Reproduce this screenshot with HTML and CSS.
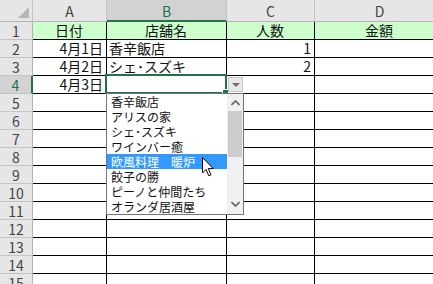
FILE: index.html
```html
<!DOCTYPE html>
<html lang="ja">
<head>
  <meta charset="UTF-8">
  <meta name="viewport" content="width=device-width, initial-scale=1.0">
  <title>店舗リスト</title>
  <link rel="stylesheet" href="styles.css">
</head>
<body>
  <div class="sheet">
    <div class="corner"><span class="corner__tri"></span></div>
    <div class="col-head">A</div>
    <div class="col-head _active">B</div>
    <div class="col-head">C</div>
    <div class="col-head">D</div>

    <div class="row-head">1</div>
    <div class="cell title">日付</div>
    <div class="cell title">店舗名</div>
    <div class="cell title">人数</div>
    <div class="cell title">金額</div>

    <div class="row-head">2</div>
    <div class="cell num">4月1日</div>
    <div class="cell">香辛飯店</div>
    <div class="cell num">1</div>
    <div class="cell"></div>

    <div class="row-head">3</div>
    <div class="cell num">4月2日</div>
    <div class="cell">シェ･スズキ</div>
    <div class="cell num">2</div>
    <div class="cell"></div>

    <div class="row-head _active">4</div>
    <div class="cell num">4月3日</div>
    <div class="cell"></div>
    <div class="cell"></div>
    <div class="cell"></div>

    <div class="row-head">5</div><div class="cell"></div><div class="cell"></div><div class="cell"></div><div class="cell"></div>
    <div class="row-head">6</div><div class="cell"></div><div class="cell"></div><div class="cell"></div><div class="cell"></div>
    <div class="row-head">7</div><div class="cell"></div><div class="cell"></div><div class="cell"></div><div class="cell"></div>
    <div class="row-head">8</div><div class="cell"></div><div class="cell"></div><div class="cell"></div><div class="cell"></div>
    <div class="row-head">9</div><div class="cell"></div><div class="cell"></div><div class="cell"></div><div class="cell"></div>
    <div class="row-head">10</div><div class="cell"></div><div class="cell"></div><div class="cell"></div><div class="cell"></div>
    <div class="row-head">11</div><div class="cell"></div><div class="cell"></div><div class="cell"></div><div class="cell"></div>
    <div class="row-head">12</div><div class="cell"></div><div class="cell"></div><div class="cell"></div><div class="cell"></div>
    <div class="row-head">13</div><div class="cell"></div><div class="cell"></div><div class="cell"></div><div class="cell"></div>
    <div class="row-head">14</div><div class="cell"></div><div class="cell"></div><div class="cell"></div><div class="cell"></div>
    <div class="row-head">15</div><div class="cell"></div><div class="cell"></div><div class="cell"></div><div class="cell"></div>

    <div class="selection"><span class="selection__handle"></span></div>
    <div class="drop__btn"><span class="drop__arrow"></span></div>

    <div class="list">
      <ul class="list__items">
        <li>香辛飯店</li>
        <li>アリスの家</li>
        <li>シェ･スズキ</li>
        <li>ワインバー癒</li>
        <li class="_hover">欧風料理　暖炉</li>
        <li>餃子の勝</li>
        <li>ピーノと仲間たち</li>
        <li>オランダ居酒屋</li>
      </ul>
      <div class="scroll">
        <svg class="scroll__up" width="9" height="6" viewBox="0 0 9 6"><path d="M0.5 5 L4.5 1 L8.5 5" fill="none" stroke="#606060" stroke-width="1.6"/></svg>
        <div class="scroll__thumb"></div>
        <svg class="scroll__down" width="9" height="6" viewBox="0 0 9 6"><path d="M0.5 1 L4.5 5 L8.5 1" fill="none" stroke="#606060" stroke-width="1.6"/></svg>
      </div>
    </div>

    <svg class="cursor" width="13" height="20" viewBox="0 0 13 20">
      <path d="M0.5 0.5 L0.5 16 L4 12.5 L6.8 18.8 L9 17.8 L6.3 11.6 L11.2 11.6 Z" fill="#fff" stroke="#000" stroke-width="1"/>
    </svg>
  </div>
</body>
</html>
```

FILE: styles.css
```css
body {
  margin: 0;
  overflow: hidden;
  background: #fff;
  font-family: "Noto Sans CJK JP", sans-serif;
}

.sheet {
  position: relative;
  display: grid;
  grid-template-columns: 33px 74px 120px 88px 130px;
  grid-template-rows: 22px;
  grid-auto-rows: 18px;
}

.corner {
  position: relative;
  background: #e6e6e6;
  border-right: 1px solid #c4c4c4;
  border-bottom: 1px solid #b4b4b4;
}
.corner__tri {
  position: absolute;
  right: 3px;
  bottom: 3px;
  width: 0;
  height: 0;
  border-left: 11px solid transparent;
  border-bottom: 11px solid #b6b6b6;
}

.col-head {
  background: #e6e6e6;
  border-right: 1px solid #c4c4c4;
  border-bottom: 1px solid #b4b4b4;
  color: #444;
  font-size: 14px;
  line-height: 19px;
  padding-top: 2px;
  text-align: center;
}
.col-head._active {
  background: #d2d2d2;
  color: #217346;
  border-bottom: 2px solid #217346;
}

.row-head {
  background: #e6e6e6;
  border-right: 1px solid #b4b4b4;
  border-bottom: 1px solid #c4c4c4;
  color: #444;
  font-size: 14px;
  line-height: 18px;
  text-align: center;
}
.row-head._active {
  background: #d2d2d2;
  color: #217346;
  border-right: 2px solid #217346;
}

.cell {
  border-right: 1px solid #000;
  border-bottom: 1px solid #000;
  padding: 0 3px 0 2px;
  font-size: 14px;
  line-height: 17px;
  white-space: nowrap;
  color: #111;
}
.cell.title {
  background: #ccffcc;
  text-align: center;
}
.cell.num {
  text-align: right;
}

.selection {
  position: absolute;
  left: 105px;
  top: 74px;
  width: 122px;
  height: 20px;
  box-sizing: border-box;
  border: 2px solid #217346;
}
.selection__handle {
  position: absolute;
  right: -4px;
  bottom: -4px;
  width: 5px;
  height: 5px;
  background: #217346;
  border: 1px solid #fff;
}

.drop__btn {
  position: absolute;
  left: 228px;
  top: 77px;
  width: 15px;
  height: 15px;
  box-sizing: border-box;
  background: #e9e9e9;
  border: 1px solid #c8c8c8;
  display: flex;
  align-items: center;
  justify-content: center;
}
.drop__arrow {
  width: 0;
  height: 0;
  border-left: 4px solid transparent;
  border-right: 4px solid transparent;
  border-top: 4px solid #707070;
}

.list {
  position: absolute;
  left: 106px;
  top: 93px;
  width: 138px;
  height: 122px;
  box-sizing: border-box;
  display: flex;
  background: #fff;
  border: 1px solid #767676;
}
.list__items {
  flex: 1;
  margin: 0;
  padding: 0;
  list-style: none;
}
.list__items li {
  height: 15px;
  padding-left: 4px;
  font-size: 12px;
  line-height: 15px;
  white-space: nowrap;
  color: #111;
}
.list__items li._hover {
  background: #3399ff;
  color: #fff;
}

.scroll {
  width: 16px;
  background: #f0f0f0;
  display: flex;
  flex-direction: column;
  align-items: center;
}
.scroll__up {
  margin-top: 6px;
}
.scroll__thumb {
  width: 14px;
  height: 46px;
  margin-top: 5px;
  background: #cdcdcd;
}
.scroll__down {
  margin-top: auto;
  margin-bottom: 7px;
}

.cursor {
  position: absolute;
  left: 202px;
  top: 157px;
}
```
